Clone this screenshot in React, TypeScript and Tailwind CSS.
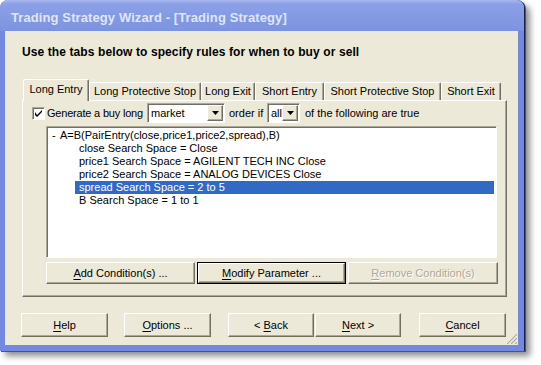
import type { ReactNode } from 'react'

const raised =
  'border border-t-white border-l-white border-r-[#716f64] border-b-[#716f64] shadow-[inset_-1px_-1px_0_#aca899]'
const sunken =
  'border border-t-[#aca899] border-l-[#aca899] border-r-white border-b-white shadow-[inset_1px_1px_0_#716f64]'

const tabs = [
  { label: 'Long Entry', w: 'w-[66px]', active: true },
  { label: 'Long Protective Stop', w: 'w-[112px]' },
  { label: 'Long Exit', w: 'w-[54px]' },
  { label: 'Short Entry', w: 'w-[69px]' },
  { label: 'Short Protective Stop', w: 'w-[117px]' },
  { label: 'Short Exit', w: 'w-[60px]' },
]

const children = [
  'close Search Space = Close',
  'price1 Search Space = AGILENT TECH INC Close',
  'price2 Search Space = ANALOG DEVICES Close',
  'spread Search Space = 2 to 5',
  'B Search Space = 1 to 1',
]

function U({ children }: { children: string }) {
  return <span className="underline underline-offset-[2px]">{children}</span>
}

function Button({
  children,
  className = '',
  isDefault = false,
  disabled = false,
}: {
  children: ReactNode
  className?: string
  isDefault?: boolean
  disabled?: boolean
}) {
  const face = (
    <div
      className={`flex h-full w-full items-center justify-center whitespace-pre bg-[#ece9d8] ${raised} ${
        disabled ? 'text-[#aca899] [text-shadow:1px_1px_0_#fff]' : 'text-black'
      }`}
    >
      <span>{children}</span>
    </div>
  )
  if (isDefault) return <div className={`border border-black ${className}`}>{face}</div>
  return <div className={className}>{face}</div>
}

function Combo({ value, className }: { value: string; className: string }) {
  return (
    <div className={`flex h-[20px] items-stretch bg-white ${sunken} p-px ${className}`}>
      <span className="flex flex-1 items-center pl-[2px] leading-none">{value}</span>
      <div className={`flex w-[16px] items-center justify-center bg-[#ece9d8] ${raised}`}>
        <svg width="7" height="4" viewBox="0 0 7 4">
          <path d="M0 0h7L3.5 4z" fill="#000" />
        </svg>
      </div>
    </div>
  )
}

export default function App() {
  return (
    <div className="h-[365px] w-[541px] overflow-hidden bg-white font-['Liberation_Sans',Arial,sans-serif] text-[11px] text-black">
      <div className="flex h-[351px] w-[525px] flex-col rounded-t-[8px] border-r border-r-[#1c1f44] bg-[#7389df] shadow-[1px_1px_0_#555,5px_5px_6px_rgba(0,0,0,0.45)]">
        {/* title bar */}
        <div className="flex h-[31px] items-center rounded-t-[8px] bg-[linear-gradient(to_bottom,#a9b8ef_0px,#8ba0e6_4px,#7d93e0_100%)] pl-[11px] pt-[3px]">
          <span className="text-[13px] font-bold leading-none tracking-[0.1px] text-[#dfe6fa]">
            Trading Strategy Wizard - [Trading Strategy]
          </span>
        </div>

        {/* client area */}
        <div className="relative ml-[5px] mr-[6px] flex h-[314px] flex-col bg-[#ece9d8] pl-[17px] pt-[14px]">
          <div className="h-[14px] text-[12px] font-bold leading-[14px] tracking-[0.1px]">
            Use the tabs below to specify rules for when to buy or sell
          </div>

          {/* tabs */}
          <div className="mt-[20px] flex h-[21px] items-end pl-px">
            {tabs.map((t) =>
              t.active ? (
                <div
                  key={t.label}
                  className={`relative z-10 -mb-px flex h-[22px] ${t.w} items-center justify-center rounded-t-[2px] border-l border-t border-r border-l-white border-t-white border-r-[#716f64] bg-[#ece9d8] pb-[2px] shadow-[inset_-1px_0_0_#aca899]`}
                >
                  {t.label}
                </div>
              ) : (
                <div
                  key={t.label}
                  className={`flex h-[18px] ${t.w} items-center justify-center rounded-t-[2px] border-l border-t border-r border-l-white border-t-white border-r-[#716f64] shadow-[inset_-1px_0_0_#aca899]`}
                >
                  {t.label}
                </div>
              ),
            )}
          </div>

          {/* tab panel */}
          <div className={`flex h-[197px] w-[485px] flex-col ${raised}`}>
            <div className="mt-[2px] flex h-[20px] items-center whitespace-nowrap pl-[9px]">
              <div className={`flex h-[13px] w-[13px] items-center justify-center bg-white ${sunken}`}>
                <svg width="7" height="7" viewBox="0 0 7 7">
                  <path d="M0 2v3l2 2 5-5V-0l-5 5z" fill="#000" />
                </svg>
              </div>
              <span className="ml-[2px] w-[100px] tracking-[-0.2px]">Generate a buy long</span>
              <Combo value="market" className="w-[78px]" />
              <span className="ml-[4px] w-[38px]">order if</span>
              <Combo value="all" className="w-[33px]" />
              <span className="ml-[5px]">of the following are true</span>
            </div>

            {/* condition tree */}
            <div className={`ml-[23px] mt-[3px] h-[132px] w-[451px] bg-white p-[2px] ${sunken}`}>
              <div className="flex h-[13px] items-center whitespace-nowrap pl-[3px] leading-none">
                <span className="w-[8px]">-</span>
                <span>A=B(PairEntry(close,price1,price2,spread),B)</span>
              </div>
              {children.map((c) => (
                <div key={c} className="ml-[26px] flex h-[13px] items-center whitespace-nowrap leading-none">
                  <span
                    className={`flex h-full flex-1 items-center pl-[4px] ${
                      c.startsWith('spread') ? 'bg-[#316ac5] text-white' : ''
                    }`}
                  >
                    {c}
                  </span>
                </div>
              ))}
            </div>

            <div className="ml-[23px] mt-[4px] flex h-[22px] gap-[2px]">
              <Button className="w-[149px]">
                <U>A</U>dd Condition(s) ...
              </Button>
              <Button className="w-[149px]" isDefault>
                <U>M</U>odify Parameter ...
              </Button>
              <Button className="w-[150px]" disabled>
                <U>R</U>emove Condition(s)
              </Button>
            </div>
          </div>

          {/* wizard buttons */}
          <div className="-ml-px mt-[16px] flex h-[24px]">
            <Button className="w-[87px]">
              <U>H</U>elp
            </Button>
            <Button className="ml-[16px] w-[87px]">
              <U>O</U>ptions ...
            </Button>
            <Button className="ml-[17px] w-[86px]">
              {'< '}
              <U>B</U>ack
            </Button>
            <Button className="ml-px w-[86px]">
              <U>N</U>ext {'>'}
            </Button>
            <Button className="ml-[18px] w-[87px]">
              <U>C</U>ancel
            </Button>
          </div>

          <svg className="absolute bottom-[1px] right-[1px]" width="12" height="12" viewBox="0 0 12 12">
            {[0, 4, 8].map((o) => (
              <g key={o}>
                <line x1={12} y1={1 + o} x2={1 + o} y2={12} stroke="#fff" strokeWidth="1" />
                <line x1={12} y1={2 + o} x2={2 + o} y2={12} stroke="#aca899" strokeWidth="1.2" />
              </g>
            ))}
          </svg>
        </div>
      </div>
    </div>
  )
}
